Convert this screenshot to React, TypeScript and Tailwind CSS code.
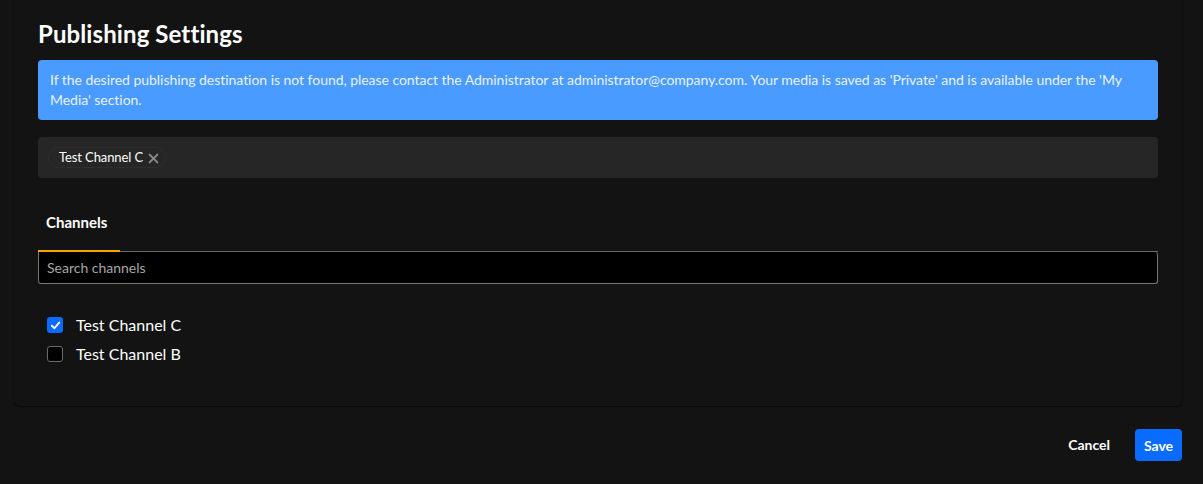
import React from "react";

export default function App() {
  return (
    <div
      className="w-[1203px] h-[484px] bg-[#131313] text-white overflow-hidden flex flex-col"
      style={{ fontFamily: "Lato, 'Noto Sans', sans-serif" }}
    >
      <div className="ml-[14px] mr-[21px] h-[406px] rounded-b-[6px] shadow-[0_1px_2px_rgba(0,0,0,0.6)] bg-[#131313] px-[24px] pt-[19px]">
        <h1 className="text-[24px] font-bold leading-[30px] tracking-[0.1px] text-white">Publishing Settings</h1>
        <div className="mt-[11px] rounded-[4px] bg-[#4a9bff] px-[12px] py-[10px] text-[14px] leading-[20px] tracking-[-0.04px] text-[#e8f1ff]">
          If the desired publishing destination is not found, please contact the Administrator at administrator@company.com. Your media is saved as 'Private' and is available under the 'My Media' section.
        </div>
        <div className="mt-[17px] h-[41px] rounded-[4px] bg-[#262626] flex items-center px-[10px]">
          <div className="flex items-center gap-[5px] rounded-full border border-[#2e2e2e] pl-[10px] pr-[6px] h-[21px]">
            <span className="text-[13px] tracking-[-0.1px] text-white">Test Channel C</span>
            <svg width="11" height="11" viewBox="0 0 10 10" className="mt-[1px]">
              <path d="M1.5 1.5 L8.5 8.5 M8.5 1.5 L1.5 8.5" stroke="#8a8a8a" strokeWidth="1.8" strokeLinecap="round" />
            </svg>
          </div>
        </div>
        <div className="mt-[28px]">
          <div className="flex border-b border-[#6a6a6a]">
            <div className="w-[82px] h-[46px] border-b-2 border-[#f5a500] -mb-[1px] flex items-start pt-[6px] pl-[8px]">
              <span className="text-[15px] font-bold leading-[20px]">Channels</span>
            </div>
          </div>
          <div className="h-[32px] bg-black border border-[#777] border-t-0 rounded-b-[3px] rounded-tr-[3px] flex items-center px-[8px]">
            <span className="text-[14px] text-[#a6a6a6]">Search channels</span>
          </div>
        </div>
        <div className="mt-[33px] pl-[9px] flex flex-col gap-[13px]">
          <label className="flex items-center gap-[13px]">
            <span className="w-[16px] h-[16px] rounded-[3px] bg-[#0a6cff] flex items-center justify-center">
              <svg width="11" height="11" viewBox="0 0 12 12">
                <path d="M2 6.3 L4.8 9 L10 2.8" fill="none" stroke="white" strokeWidth="2" strokeLinecap="round" strokeLinejoin="round" />
              </svg>
            </span>
            <span className="text-[16px] leading-[16px]">Test Channel C</span>
          </label>
          <label className="flex items-center gap-[13px]">
            <span className="w-[16px] h-[16px] rounded-[3px] bg-black border border-[#6a6a6a]" />
            <span className="text-[16px] leading-[16px]">Test Channel B</span>
          </label>
        </div>
      </div>
      <div className="flex items-center justify-end gap-[25px] pr-[21px] pt-[23px]">
        <button className="text-[14px] font-bold text-white leading-[18px] -mt-px">Cancel</button>
        <button className="h-[32px] w-[47px] rounded-[4px] bg-[#0a6cff] text-[14px] font-bold text-white">Save</button>
      </div>
    </div>
  );
}
